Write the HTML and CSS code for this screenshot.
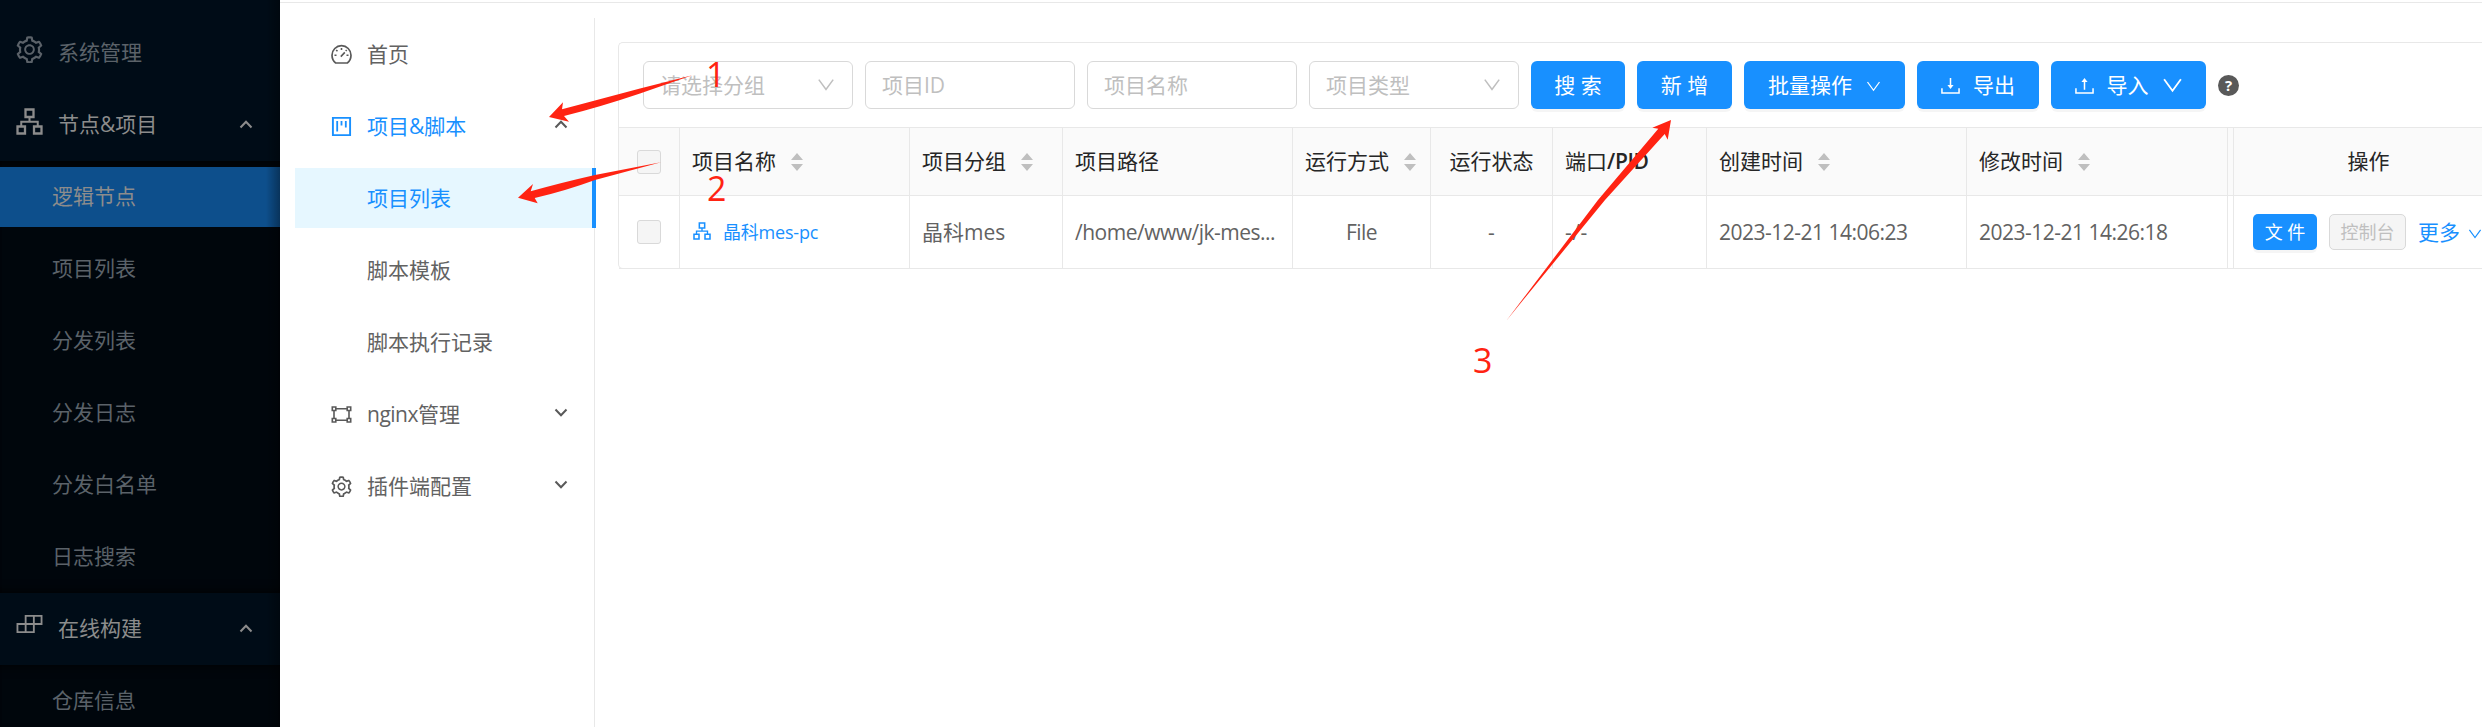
FILE: index.html
```html
<!DOCTYPE html>
<html lang="zh-CN">
<head>
<meta charset="utf-8">
<title>项目列表</title>
<link rel="stylesheet" href="styles.css">
</head>
<body>
<svg class="sprite" aria-hidden="true">
  <symbol id="i-setting" viewBox="64 54 896 896"><path d="M924.8 625.7l-65.5-56c3.1-19 4.7-38.4 4.7-57.800s-1.600-38.800-4.700-57.800l65.500-56a32.030 32.030 0 0 0 9.300-35.200l-.9-2.600a443.740 443.740 0 0 0-79.700-137.900l-1.800-2.100a32.120 32.120 0 0 0-35.100-9.500l-81.300 28.900c-30-24.600-63.500-44-99.700-57.600l-15.700-85a32.050 32.050 0 0 0-25.800-25.700l-2.700-.5c-52.100-9.400-106.900-9.400-159 0l-2.700.5a32.050 32.050 0 0 0-25.800 25.700l-15.800 85.400a351.860 351.860 0 0 0-99 57.400l-81.900-29.100a32 32 0 0 0-35.100 9.500l-1.800 2.100a446.020 446.020 0 0 0-79.700 137.900l-.9 2.600c-4.500 12.500-.8 26.500 9.300 35.200l66.300 56.600c-3.100 18.800-4.600 38-4.600 57.100 0 19.200 1.500 38.400 4.600 57.100L99 625.500a32.030 32.030 0 0 0-9.300 35.200l.9 2.600c18.100 50.400 44.900 96.900 79.700 137.900l1.800 2.100a32.120 32.120 0 0 0 35.100 9.500l81.900-29.100c29.800 24.500 63.100 43.900 99 57.400l15.800 85.400a32.050 32.050 0 0 0 25.800 25.700l2.700.5a449.400 449.400 0 0 0 159 0l2.700-.5a32.050 32.050 0 0 0 25.800-25.700l15.700-85a350 350 0 0 0 99.700-57.600l81.300 28.900a32 32 0 0 0 35.100-9.500l1.800-2.100c34.800-41.100 61.600-87.500 79.700-137.900l.9-2.600c4.500-12.300.8-26.300-9.300-35zM788.300 465.900c2.500 15.100 3.800 30.600 3.800 46.100s-1.300 31-3.800 46.100l-6.600 40.100 74.700 63.900a370.030 370.030 0 0 1-42.600 73.600L721 702.800l-31.400 25.800c-23.900 19.600-50.500 35-79.300 45.800l-38.100 14.300-17.900 97a377.500 377.500 0 0 1-85 0l-17.900-97.200-37.800-14.500c-28.500-10.800-55-26.200-78.700-45.700l-31.400-25.900-93.400 33.200c-17-22.900-31.200-47.600-42.600-73.600l75.500-64.500-6.500-40c-2.400-14.900-3.700-30.300-3.700-45.500 0-15.300 1.200-30.600 3.700-45.500l6.500-40-75.500-64.500c11.300-26.100 25.600-50.700 42.600-73.600l93.400 33.200 31.400-25.900c23.700-19.500 50.200-34.900 78.700-45.700l37.900-14.300 17.900-97.200c28.100-3.200 56.800-3.200 85 0l17.900 97 38.100 14.300c28.700 10.800 55.400 26.200 79.300 45.800l31.400 25.800 92.800-32.900c17 22.900 31.200 47.600 42.600 73.600L781.800 426l6.500 39.900zM512 326c-97.200 0-176 78.800-176 176s78.800 176 176 176 176-78.800 176-176-78.800-176-176-176zm79.200 255.200A111.600 111.600 0 0 1 512 614c-29.900 0-58-11.700-79.200-32.800A111.600 111.600 0 0 1 400 502c0-29.900 11.700-58 32.800-79.200C454 401.600 482.100 390 512 390c29.900 0 58 11.600 79.200 32.800A111.600 111.600 0 0 1 624 502c0 29.900-11.700 58-32.800 79.200z"/></symbol>
  <symbol id="i-org" viewBox="0 0 27 27"><g fill="none" stroke="currentColor" stroke-width="2.300"><path d="M9.500 1.500h8v7.500h-8zM1.500 18.500h7.500v7h-7.500zM18 18.500h7.500v7h-7.500z"/><path d="M13.500 9v4.700M5.250 18.500v-4.800h16.500v4.800" stroke-width="2"/></g></symbol>
  <symbol id="i-build" viewBox="0 0 28 20"><g fill="none" stroke="currentColor" stroke-width="1.900"><path d="M10 1.500h16.500v8.500H10zM1.500 10h17v8.500h-17zM18.500 1.500v8.500M10 10v8.500"/></g></symbol>
  <symbol id="i-dash" viewBox="0 0 21 21"><g fill="none" stroke="currentColor" stroke-width="1.700"><path d="M4.700 19C2.400 17.200 1 14.500 1 11.200a9.500 9.500 0 0 1 19 0c0 3.300-1.400 6-3.700 7.800z"/><path d="M9.800 12.600l4-4.200M10.500 4v2M5.200 6l1.300 1.300M3.500 11.300h2M15.500 11.300h2M14.700 7l1-1" stroke-width="1.600"/></g></symbol>
  <symbol id="i-project" viewBox="0 0 21 21"><g fill="none" stroke="currentColor"><path d="M1.900 1.900h17.200v17.200H1.900z" stroke-width="1.900"/><path d="M6.200 5v10.500M10.500 5v4.500M14.800 5v6.500" stroke-width="1.800"/></g></symbol>
  <symbol id="i-gateway" viewBox="0 0 21 21"><g fill="none" stroke="currentColor" stroke-width="1.600"><path d="M1.300 3h3.500v3.500H1.300zM16.200 3h3.500v3.500h-3.500zM1.300 14.500h3.500V18H1.300zM16.200 14.500h3.500V18h-3.500zM4.800 4.800h11.400M4.800 16.200h11.400M3 6.500v8M18 6.500v8"/></g></symbol>
  <symbol id="i-down" viewBox="0 0 20 20"><path d="M2 4l8 11 8-11" fill="none" stroke="currentColor" stroke-width="1.700"/></symbol>
  <symbol id="i-angle" viewBox="0 0 14 9"><path d="M1.500 1.500l5.500 5.700 5.500-5.700" fill="none" stroke="currentColor" stroke-width="2"/></symbol>
  <symbol id="i-export" viewBox="0 0 20 20"><path d="M1 13v5h18v-5M10 2v9" fill="none" stroke="currentColor" stroke-width="1.600"/><path d="M6.800 9.500h6.400L10 13.700z" fill="currentColor"/></symbol>
  <symbol id="i-import" viewBox="0 0 20 20"><path d="M1 13v5h18v-5M10 5v9.500" fill="none" stroke="currentColor" stroke-width="1.600"/><path d="M6.800 6.200h6.400L10 2z" fill="currentColor"/></symbol>
  <symbol id="i-sort" viewBox="0 0 12 18"><path d="M0 7l6-7 6 7zM0 11h12l-6 7z" fill="currentColor"/></symbol>
</svg>

<div class="app">
  <nav class="side">
    <div class="row title"><svg class="ico"><use href="#i-setting"/></svg><span>系统管理</span></div>
    <div class="row title open"><svg class="ico"><use href="#i-org"/></svg><span>节点&amp;项目</span><svg class="angle up"><use href="#i-angle"/></svg></div>
    <div class="sub">
      <div class="row active"><span>逻辑节点</span></div>
      <div class="row"><span>项目列表</span></div>
      <div class="row"><span>分发列表</span></div>
      <div class="row"><span>分发日志</span></div>
      <div class="row"><span>分发白名单</span></div>
      <div class="row"><span>日志搜索</span></div>
    </div>
    <div class="row title open"><svg class="ico build"><use href="#i-build"/></svg><span>在线构建</span><svg class="angle up"><use href="#i-angle"/></svg></div>
    <div class="sub">
      <div class="row"><span>仓库信息</span></div>
    </div>
  </nav>

  <div class="main">
    <nav class="menu">
      <div class="item"><svg class="mico"><use href="#i-dash"/></svg><span>首页</span></div>
      <div class="item blue"><svg class="mico"><use href="#i-project"/></svg><span>项目&amp;脚本</span><svg class="angle up"><use href="#i-angle"/></svg></div>
      <div class="item leaf blue current"><span>项目列表</span></div>
      <div class="item leaf"><span>脚本模板</span></div>
      <div class="item leaf"><span>脚本执行记录</span></div>
      <div class="item"><svg class="mico"><use href="#i-gateway"/></svg><span><span class="tight">nginx</span>管理</span><svg class="angle"><use href="#i-angle"/></svg></div>
      <div class="item"><svg class="mico"><use href="#i-setting"/></svg><span>插件端配置</span><svg class="angle"><use href="#i-angle"/></svg></div>
    </nav>

    <section class="panel">
      <div class="tools">
        <div class="field">请选择分组<svg class="caret"><use href="#i-down"/></svg></div>
        <div class="field">项目ID</div>
        <div class="field">项目名称</div>
        <div class="field">项目类型<svg class="caret"><use href="#i-down"/></svg></div>
        <div class="btn w94">搜 索</div>
        <div class="btn w95">新 增</div>
        <div class="btn w161">批量操作<svg class="c13"><use href="#i-down"/></svg></div>
        <div class="btn w122"><svg class="c19"><use href="#i-export"/></svg>导出</div>
        <div class="btn w155"><svg class="c19"><use href="#i-import"/></svg>导入<svg class="c21"><use href="#i-down"/></svg></div>
        <div class="help">?</div>
      </div>
      <div class="grid head">
        <div class="cell mid"><i class="check"></i></div>
        <div class="cell">项目名称<svg class="sort"><use href="#i-sort"/></svg></div>
        <div class="cell">项目分组<svg class="sort"><use href="#i-sort"/></svg></div>
        <div class="cell">项目路径</div>
        <div class="cell">运行方式<svg class="sort"><use href="#i-sort"/></svg></div>
        <div class="cell mid">运行状态</div>
        <div class="cell">端口<b>/PID</b></div>
        <div class="cell">创建时间<svg class="sort"><use href="#i-sort"/></svg></div>
        <div class="cell">修改时间<svg class="sort"><use href="#i-sort"/></svg></div>
        <div class="cell gap"></div>
        <div class="cell mid">操作</div>
      </div>
      <div class="grid body">
        <div class="cell mid"><i class="check"></i></div>
        <div class="cell link"><svg class="lico"><use href="#i-org"/></svg>晶科mes-pc</div>
        <div class="cell">晶科mes</div>
        <div class="cell tight">/home/www/jk-mes...</div>
        <div class="cell mid tight">File</div>
        <div class="cell mid">-</div>
        <div class="cell port">-/-</div>
        <div class="cell tight">2023-12-21 14:06:23</div>
        <div class="cell tight">2023-12-21 14:26:18</div>
        <div class="cell gap"></div>
        <div class="cell ops"><span class="sbtn">文 件</span><span class="sbtn off">控制台</span><span class="more">更多<svg class="c13"><use href="#i-down"/></svg></span></div>
      </div>
    </section>
  </div>

  <svg class="notes" viewBox="0 0 2482 727">
    <path d="M549 117L563 102.300L562 109.300Q595 100.500 640 88.500L692.300 75.300L640 93.500Q600 107 564 116L569 121.700z"/>
    <path d="M518 197.700L533 184L530.700 191.300Q560 183 595 175L661 162.300L595 180Q565 191 534.700 198L537.700 203.300z"/>
    <path d="M1671 120L1652.300 127.700L1658.300 128.700L1598 200L1506.300 320.700L1605 200L1664.700 134L1667.700 139.700z"/>
    <text x="706" y="87">1</text>
    <text x="707" y="201">2</text>
    <text x="1473" y="373">3</text>
  </svg>
</div>
</body>
</html>
```
FILE: styles.css
```css
* { box-sizing: border-box; }
body {
  margin: 0;
  width: 2482px;
  height: 727px;
  overflow: hidden;
  background: #fff;
  font: 21px/33px "Open Sans", "Noto Sans CJK SC", sans-serif;
  font-weight: 400;
  color: #626262;
}
.sprite { position: absolute; width: 0; height: 0; }
svg { fill: currentColor; flex: none; }
.app { position: relative; display: flex; width: 2482px; height: 727px; overflow: hidden; }

/* dark navigation */
.side {
  position: relative;
  flex: none;
  width: 280px;
  height: 727px;
  padding-top: 17px;
  background: #000c17;
  color: #5b6269;
  overflow: hidden;
}
.side::after { content: ""; position: absolute; top: 0; right: 0; width: 14px; height: 100%; background: linear-gradient(to right, transparent, rgba(0, 0, 0, .35)); }
.row { display: flex; align-items: center; height: 60px; margin: 6px 0; padding: 0 0 2px 52px; }
.row + .row { margin-top: 12px; }
.title { height: 72px; margin: 0; padding-left: 16px; }
.row + .row.title { margin-top: 0; }
.title .ico { width: 27px; height: 27px; margin: -5px 15px 0 0; }
.title .ico.build { height: 20px; margin-top: -9px; }
.open { color: #8c8c8c; }
.sub { display: flow-root; background: #00060c; box-shadow: inset 0 12px 12px -12px #000, inset 0 -12px 12px -12px #000; }
.active { background: #0d4f8c; color: #8c8c8c; }
.angle { width: 14px; height: 9px; margin-left: auto; }
.up { transform: scaleY(-1); }
.side .angle { margin-right: 27px; }

.main { flex: none; width: 2202px; display: flex; border-top: 1px solid #e8e8e8; margin-top: 2px; }

/* light navigation */
.menu { flex: none; width: 300px; margin: 15px 0 0 15px; border-right: 1px solid #e8e8e8; }
.item { display: flex; align-items: center; height: 60px; margin: 6px 0 12px; padding: 1px 26px 0 36px; }
.mico { width: 21px; height: 21px; margin-right: 15px; color: #595959; }
.blue .mico { color: #1890ff; }
.leaf { padding-left: 72px; }
.blue { color: #1890ff; }
.item .angle { color: #595959; margin-top: -5px; }
.current { margin-right: -2px; background: #e6f7ff; border-right: 4px solid #1890ff; }
.tight { letter-spacing: -.5px; }

/* content */
.panel { width: 1886px; flex: none; margin: 39px 0 0 23px; border: 1px solid #e8e8e8; border-right: 0; border-radius: 5px; height: 227px; }
.tools { display: flex; gap: 12px; height: 84px; padding: 18px 24px; align-items: center; }
.field { display: flex; align-items: center; justify-content: space-between; width: 210px; height: 48px; padding: 0 16px; border: 1px solid #d9d9d9; border-radius: 6px; color: #bfbfbf; flex: none; }
.caret { width: 18px; height: 18px; margin-right: 1px; }
.btn { display: flex; align-items: center; justify-content: center; height: 48px; flex: none; border-radius: 6px; background: #1890ff; color: #fff; box-shadow: 0 3px 0 rgba(0, 0, 0, .04); }
.w94 { width: 94px; }
.w95 { width: 95px; }
.w161 { width: 161px; }
.w122 { width: 122px; }
.w155 { width: 155px; }
.c13 { width: 15px; height: 15px; margin-left: 14px; margin-top: 3px; }
.c19 { width: 19px; height: 19px; margin-right: 13px; }
.c21 { width: 21px; height: 21px; margin-left: 13px; }
.help { width: 21px; height: 21px; margin-top: 1px; border-radius: 50%; background: #595959; color: #fff; font: 700 15px/21px "Open Sans", sans-serif; text-align: center; }
.grid { display: grid; grid-template-columns: 61px 230px 153px 230px 138px 122px 154px 260px 261px 6px 1fr; border-bottom: 1px solid #e8e8e8; }
.head { height: 69px; border-top: 1px solid #e8e8e8; background: #fafafa; color: #262626; }
.body { height: 73px; }
.cell { display: flex; align-items: center; padding-left: 12px; border-right: 1px solid #e8e8e8; white-space: nowrap; min-width: 0; }
.mid { justify-content: center; padding: 0; }
.gap { padding: 0; }
.cell b { font-weight: 600; letter-spacing: -.3px; }
.check { width: 24px; height: 24px; border: 1px solid #d9d9d9; border-radius: 3px; background: #f5f5f5; }
.sort { width: 12px; height: 18px; margin-left: 15px; color: #bfbfbf; }
.link { color: #1890ff; font-size: 18px; letter-spacing: -.2px; }
.lico { width: 18px; height: 18px; margin: -2px 12px 0 1px; }
.port { letter-spacing: .5px; }
.ops { padding-left: 19px; gap: 12px; }
.sbtn { display: flex; align-items: center; justify-content: center; flex: none; width: 64px; height: 36px; border-radius: 5px; background: #1890ff; color: #fff; font-size: 18px; box-shadow: 0 3px 0 rgba(0, 0, 0, .04); }
.off { width: 77px; background: #f5f5f5; border: 1px solid #d9d9d9; color: #bfbfbf; box-shadow: none; }
.more { display: flex; align-items: center; color: #1890ff; }
.more .c13 { margin-left: 8px; width: 14px; height: 14px; }

/* red call-outs drawn over the screen */
.notes { position: absolute; inset: 0; width: 2482px; height: 727px; fill: #ff2312; font-size: 34px; }
```
